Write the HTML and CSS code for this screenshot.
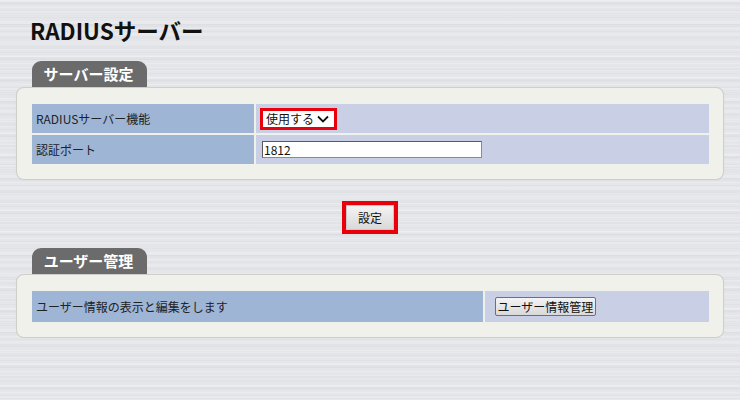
FILE: index.html
```html
<!DOCTYPE html>
<html lang="ja">
<head>
<meta charset="utf-8">
<title>RADIUSサーバー</title>
<link rel="stylesheet" href="styles.css">
</head>
<body>
<main class="page">
  <h1 class="title">RADIUSサーバー</h1>

  <section class="section">
    <div class="tab">サーバー設定</div>
    <div class="panel">
      <div class="grid grid-server">
        <div class="cell label">RADIUSサーバー機能</div>
        <div class="cell value">
          <div class="select-box">
            <span class="select-text">使用する</span>
            <svg class="chev" width="12" height="8" viewBox="0 0 12 8"><path d="M1 1.5 L6 6.5 L11 1.5" fill="none" stroke="#111" stroke-width="1.8"/></svg>
          </div>
        </div>
        <div class="cell label">認証ポート</div>
        <div class="cell value">
          <div class="text-input">1812</div>
        </div>
      </div>
    </div>
  </section>

  <div class="submit-row">
    <div class="submit-frame"><button class="btn btn-submit" type="button">設定</button></div>
  </div>

  <section class="section">
    <div class="tab">ユーザー管理</div>
    <div class="panel">
      <div class="grid grid-user">
        <div class="cell label tall">ユーザー情報の表示と編集をします</div>
        <div class="cell value tall pad-btn">
          <button class="btn btn-user" type="button">ユーザー情報管理</button>
        </div>
      </div>
    </div>
  </section>
</main>
</body>
</html>
```

FILE: styles.css
```css
html, body {
  margin: 0;
  padding: 0;
}
body {
  width: 740px;
  height: 400px;
  overflow: hidden;
  font-family: "Noto Sans CJK JP", "Noto Sans", sans-serif;
  color: #222;
  background-color: #e4e6ea;
  background-image:
    repeating-linear-gradient(180deg,
      rgba(255,255,255,0.22) 0px, rgba(255,255,255,0.22) 1px,
      rgba(0,0,0,0) 1px, rgba(0,0,0,0) 3px,
      rgba(0,0,0,0.018) 3px, rgba(0,0,0,0.018) 4px,
      rgba(0,0,0,0) 4px, rgba(0,0,0,0) 7px),
    repeating-linear-gradient(180deg,
      rgba(255,255,255,0.15) 0px, rgba(255,255,255,0.15) 2px,
      rgba(0,0,0,0.015) 2px, rgba(0,0,0,0.015) 5px,
      rgba(0,0,0,0) 5px, rgba(0,0,0,0) 11px);
}
.page {
  padding: 14px 16px 0 16px;
}
.title {
  margin: 0 0 15px 0;
  padding-left: 14px;
  font-size: 22.5px;
  line-height: 32px;
  font-weight: bold;
  color: #111;
  letter-spacing: 0;
}
.section {
  display: flex;
  flex-direction: column;
}
.tab {
  margin-left: 16px;
  width: 115px;
  height: 26px;
  box-sizing: border-box;
  background: #6b6b6b;
  border-radius: 9px 9px 0 0;
  color: #fff;
  font-weight: bold;
  font-size: 15px;
  line-height: 26px;
  text-align: center;
  padding-right: 2px;
}
.panel {
  background: #f1f1ec;
  border: 1px solid #cfcfca;
  border-radius: 8px;
  padding: 16px 14px 15px 15px;
  box-shadow: 0 0 1px rgba(0,0,0,0.08);
}
.grid {
  display: grid;
  column-gap: 2px;
  row-gap: 2px;
}
.grid-server {
  grid-template-columns: 222px 1fr;
  grid-auto-rows: 29px;
}
.grid-user {
  grid-template-columns: 451px 1fr;
  grid-auto-rows: 31px;
}
.cell {
  display: flex;
  align-items: center;
  font-size: 12px;
  color: #222;
}
.label {
  background: #9fb5d5;
  padding-left: 4px;
}
.value {
  background: #c9d0e5;
  padding-left: 4px;
}
.select-box {
  width: 77px;
  height: 22px;
  box-sizing: border-box;
  border: 3px solid #e8000b;
  background: #fff;
  display: flex;
  align-items: center;
  justify-content: space-between;
  padding: 0 5px 0 3px;
}
.select-text {
  font-size: 12px;
  color: #111;
}
.chev {
  display: block;
}
.text-input {
  margin-left: 2px;
  width: 220px;
  height: 17px;
  box-sizing: border-box;
  background: #fff;
  border: 1px solid #8a8a8a;
  border-top-color: #5a5a5a;
  border-left-color: #5a5a5a;
  font-size: 12px;
  line-height: 15px;
  padding-left: 1px;
  color: #111;
}
.submit-row {
  display: flex;
  justify-content: center;
  padding: 21px 0 14px 0;
}
.submit-frame {
  width: 56px;
  height: 33px;
  box-sizing: border-box;
  border: 4px solid #e8000b;
  display: flex;
}
.btn {
  font-family: "Noto Sans CJK JP", "Noto Sans", sans-serif;
  font-size: 12px;
  color: #111;
  background: linear-gradient(180deg, #f4f4f4 0%, #e6e6e6 50%, #d9d9d9 100%);
  border: 1px solid #8d8d8d;
  margin: 0;
  padding: 0;
  cursor: default;
}
.btn-submit {
  flex: 1;
  border: 1px solid #c8c8c8;
  border-radius: 0;
}
.btn-user {
  width: 101px;
  height: 19px;
  border: 1px solid #707070;
  border-radius: 2px;
  line-height: 15px;
  font-size: 12px;
}
.pad-btn {
  padding-left: 10px;
}
```
